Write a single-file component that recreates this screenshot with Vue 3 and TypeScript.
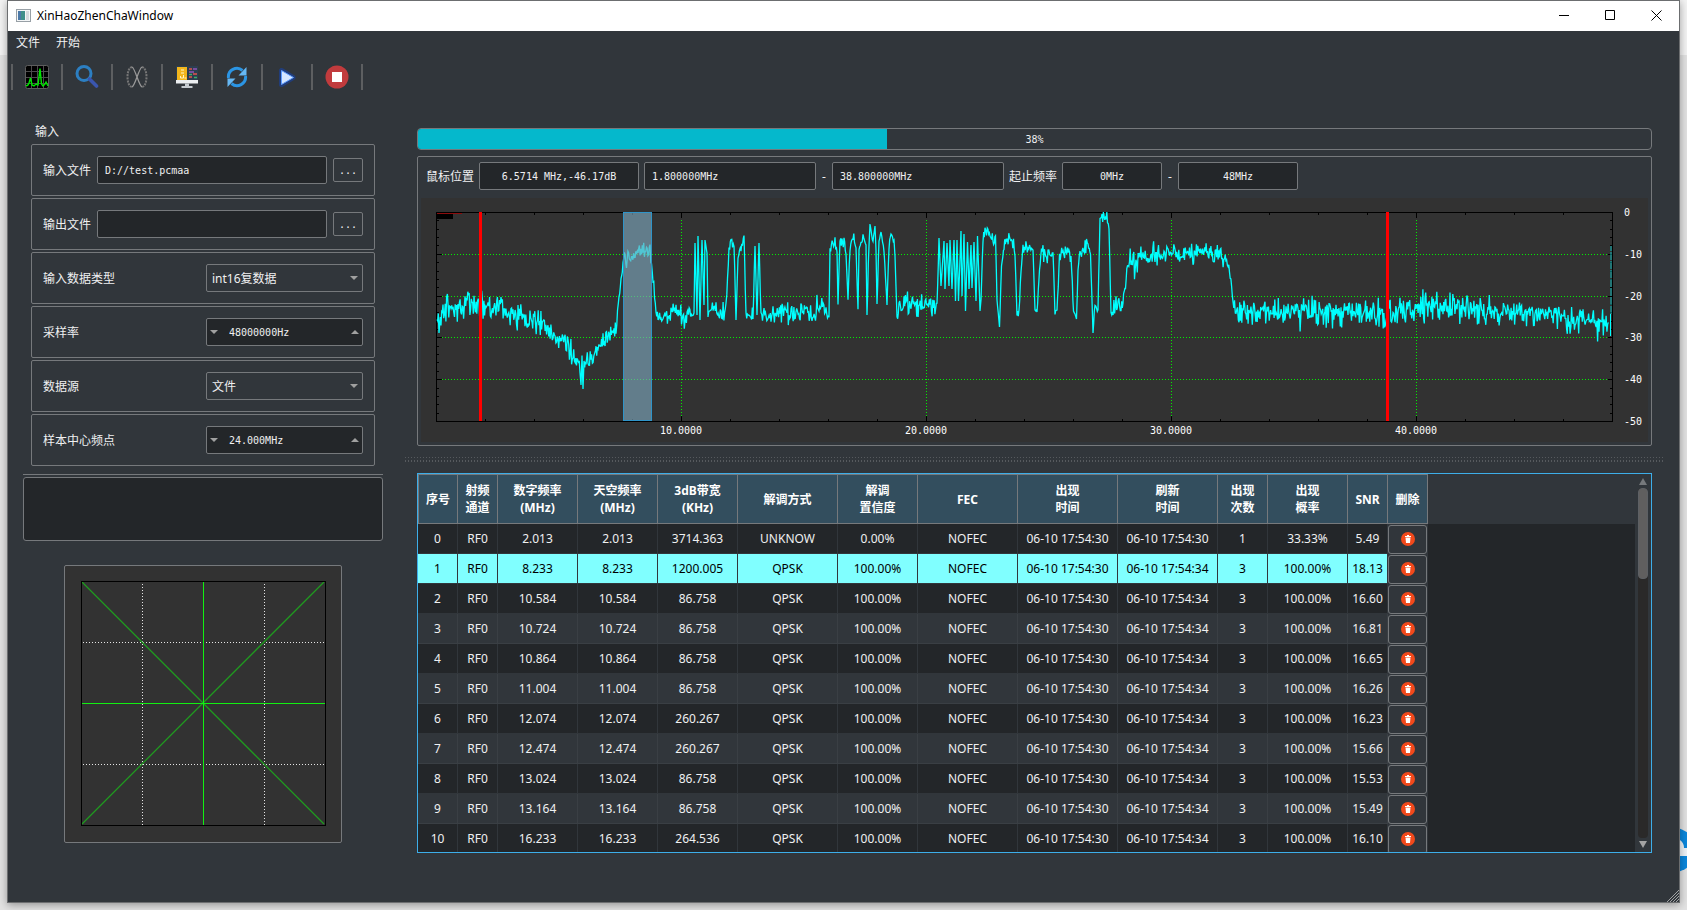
<script setup lang="ts">
import { ref } from 'vue'

interface SignalRow {
  id: number
  digital: string
  sky: string
  bandwidth: string
  modulation: string
  confidence: string
  first: string
  last: string
  count: number
  probability: string
  snr: string
}

type Anchor = [number, number, number]

const inputFile = ref('D://test.pcmaa')
const outputFile = ref('')
const dataType = ref('int16复数据')
const sampleRate = ref('48000000Hz')
const dataSource = ref('文件')
const centerFreq = ref('24.000MHz')
const message = ref('')
const progress = ref(38)
const selected = ref(1)

const mousePos = ref('6.5714 MHz,-46.17dB')
const rangeStart = ref('1.800000MHz')
const rangeEnd = ref('38.800000MHz')
const freqStart = ref('0MHz')
const freqEnd = ref('48MHz')

const columns: { lines: string[]; width: number }[] = [
  { lines: ['序号'], width: 40 },
  { lines: ['射频', '通道'], width: 40 },
  { lines: ['数字频率', '(MHz)'], width: 80 },
  { lines: ['天空频率', '(MHz)'], width: 80 },
  { lines: ['3dB带宽', '(KHz)'], width: 80 },
  { lines: ['解调方式'], width: 100 },
  { lines: ['解调', '置信度'], width: 80 },
  { lines: ['FEC'], width: 100 },
  { lines: ['出现', '时间'], width: 100 },
  { lines: ['刷新', '时间'], width: 100 },
  { lines: ['出现', '次数'], width: 50 },
  { lines: ['出现', '概率'], width: 80 },
  { lines: ['SNR'], width: 40 },
  { lines: ['删除'], width: 40 },
]

function qpsk(id: number, freq: string, bandwidth: string, snr: string): SignalRow {
  return {
    id, digital: freq, sky: freq, bandwidth, modulation: 'QPSK', confidence: '100.00%',
    first: '06-10 17:54:30', last: '06-10 17:54:34', count: 3, probability: '100.00%', snr,
  }
}

const rows = ref<SignalRow[]>([
  {
    id: 0, digital: '2.013', sky: '2.013', bandwidth: '3714.363', modulation: 'UNKNOW', confidence: '0.00%',
    first: '06-10 17:54:30', last: '06-10 17:54:30', count: 1, probability: '33.33%', snr: '5.49',
  },
  qpsk(1, '8.233', '1200.005', '18.13'),
  qpsk(2, '10.584', '86.758', '16.60'),
  qpsk(3, '10.724', '86.758', '16.81'),
  qpsk(4, '10.864', '86.758', '16.65'),
  qpsk(5, '11.004', '86.758', '16.26'),
  qpsk(6, '12.074', '260.267', '16.23'),
  qpsk(7, '12.474', '260.267', '15.66'),
  qpsk(8, '13.024', '86.758', '15.53'),
  qpsk(9, '13.164', '86.758', '15.49'),
  qpsk(10, '16.233', '264.536', '16.10'),
])

function removeRow(id: number) {
  rows.value = rows.value.filter((r) => r.id !== id)
}

/* Spectrum envelope: x position, level, noise amplitude. */
const anchors: Anchor[] = [
  [1, 110, 10], [7, 100, 17], [15, 97, 13], [29, 92, 12], [45, 93, 14], [60, 95, 10], [77, 102, 13], [94, 107, 12],
  [107, 111, 11], [117, 121, 11], [127, 129, 9], [137, 141, 12], [144, 153, 9], [145, 173, 0], [146, 145, 4],
  [147, 177, 0], [148, 150, 8], [152, 150, 8], [160, 138, 10], [167, 131, 7], [174, 121, 10], [180, 116, 8],
  [183, 88, 3], [187, 50, 8], [194, 46, 10], [202, 40, 9], [207, 35, 10], [214, 41, 9], [217, 71, 12],
  [220, 102, 4], [225, 107, 6], [240, 100, 9], [249, 106, 13], [256, 101, 9], [258, 101, 0], [259, 31, 0],
  [261, 103, 0], [262, 24, 0], [264, 108, 0], [266, 28, 0], [268, 93, 0], [269, 28, 0], [271, 41, 0],
  [272, 101, 5], [275, 99, 9], [290, 101, 9], [293, 38, 5], [295, 31, 6], [298, 30, 6], [300, 108, 0],
  [302, 46, 0], [305, 35, 6], [308, 25, 3], [310, 101, 8], [317, 101, 8], [319, 34, 0], [321, 103, 0],
  [323, 31, 0], [325, 104, 8], [328, 103, 10], [360, 99, 11], [383, 96, 11], [390, 101, 12], [393, 104, 5],
  [394, 36, 5], [399, 28, 8], [401, 40, 0], [402, 92, 3], [404, 30, 6], [408, 30, 8], [410, 42, 0], [412, 87, 3],
  [414, 36, 5], [417, 24, 6], [420, 38, 3], [422, 96, 3], [423, 38, 3], [427, 25, 3], [430, 33, 0], [431, 103, 0],
  [433, 30, 6], [434, 12, 0], [437, 30, 5], [439, 14, 0], [440, 38, 0], [441, 92, 0], [443, 31, 4], [445, 20, 0],
  [448, 38, 3], [451, 93, 0], [453, 31, 6], [455, 22, 0], [458, 29, 3], [459, 44, 0], [461, 105, 6], [463, 94, 9],
  [480, 94, 12], [501, 95, 11], [503, 26, 0], [505, 74, 0], [508, 29, 0], [509, 77, 0], [511, 31, 0], [513, 74, 0],
  [514, 28, 0], [516, 77, 0], [518, 28, 0], [519.5, 89, 0], [521, 28, 0], [522.5, 89, 0], [525, 19, 0],
  [526, 84, 0], [528, 22, 0], [529.5, 99, 0], [531.5, 30, 0], [533, 77, 0], [535, 33, 0], [536, 76, 0],
  [538, 30, 0], [540, 89, 0], [541.5, 24, 0], [544, 99, 0], [545, 88, 0], [547, 26, 5], [549, 18, 5],
  [552, 20, 9], [557, 27, 7], [559.5, 26, 5], [561, 88, 0], [563.5, 115, 0], [565.5, 54, 0], [568, 31, 8],
  [573.5, 28, 5], [577.5, 32, 6], [579, 44, 0], [581, 100, 5], [583, 96, 5], [585, 60, 0], [587, 36, 6],
  [593.5, 34, 6], [597, 38, 0], [599, 98, 0], [601, 100, 4], [603.5, 58, 0], [605.5, 38, 8], [613.5, 42, 10],
  [617, 41, 0], [619, 100, 5], [621, 98, 0], [623.5, 46, 6], [630, 40, 11], [635, 41, 8], [637.5, 97, 4],
  [640.5, 107, 0], [642, 58, 0], [644, 40, 6], [652, 34, 9], [654.5, 42, 0], [657, 121, 0], [659, 94, 6],
  [662, 99, 6], [664, 6, 3], [671.5, 6, 9], [673, 17, 0], [675, 99, 4], [680, 96, 14], [685, 97, 9], [687, 92, 4],
  [689.5, 68, 8], [693.5, 50, 8], [698.5, 48, 14], [712, 44, 11], [735, 41, 10], [753.5, 40, 10], [777, 41, 10],
  [783.5, 44, 12], [793.5, 58, 10], [797, 85, 6], [800, 98, 8], [803, 101, 10], [850, 99, 13], [893, 100, 14],
  [950, 101, 13], [980, 98, 14], [1007, 95, 13], [1047, 101, 14], [1080, 101, 12], [1120, 103, 9],
  [1127, 102, 9], [1132, 110, 14], [1147, 107, 11], [1163, 111, 15], [1173, 106, 9],
]

function buildTrace(points: Anchor[]): string {
  let seed = 20417
  const random = () => {
    seed = (seed * 16807) % 2147483647
    return seed / 2147483647
  }
  const out: string[] = []
  for (let i = 0; i < points.length - 1; i++) {
    const [x0, y0, a0] = points[i]
    const [x1, y1, a1] = points[i + 1]
    const steps = Math.max(1, Math.round((x1 - x0) / 0.7))
    for (let s = 0; s < steps; s++) {
      const t = s / steps
      const amp = a0 + (a1 - a0) * t
      const spike = random() > 0.95 ? 1.6 : 1
      const noise = (random() + random() - 1) * amp * 1.3 * spike
      const y = Math.max(0, y0 + (y1 - y0) * t + noise)
      out.push(`${(x0 + (x1 - x0) * t).toFixed(1)},${y.toFixed(1)}`)
    }
  }
  return out.join(' ')
}

const trace = buildTrace(anchors)
const pxPerMHz = 24.5
const pxPerDb = 4.18
const majorX = [10, 20, 30, 40]
const minorX = Array.from({ length: 23 }, (_, i) => (i + 1) * 2)
const levels = [0, -10, -20, -30, -40, -50]
const gridY = [42, 84, 125, 167]
const minorY = Array.from({ length: 24 }, (_, i) => Math.round((i + 1) * 2 * pxPerDb))
</script>

<template>
  <div class="desktop">
    <svg class="desk-badge" width="7" height="44" viewBox="0 0 7 44" aria-hidden="true">
      <circle cx="-10" cy="22" r="22" transform="translate(4 0)" fill="#0b87dc" />
      <path d="M0 12c3 2 4 5 4 8h3v8H0z" fill="#eef3f7" />
    </svg>
    <div class="window">
      <header class="titlebar">
        <svg width="15" height="13" viewBox="0 0 15 13" aria-hidden="true">
          <rect x=".5" y=".5" width="14" height="12" fill="#f4f6f7" stroke="#98a0a6" />
          <rect x="2" y="2" width="7" height="9" fill="#3f8f8a" />
          <rect x="2" y="2" width="3" height="9" fill="#4c79a8" />
          <rect x="10" y="2" width="3" height="9" fill="#d5dade" />
        </svg>
        <h1>XinHaoZhenChaWindow</h1>
        <div class="caption">
          <button type="button" aria-label="最小化"><svg width="11" height="11" viewBox="0 0 11 11"><path d="M0 5.5h10" stroke="#000" /></svg></button>
          <button type="button" aria-label="最大化"><svg width="11" height="11" viewBox="0 0 11 11"><path d="M.5 .5h9v9h-9z" fill="none" stroke="#000" /></svg></button>
          <button type="button" aria-label="关闭"><svg width="11" height="11" viewBox="0 0 11 11"><path d="M.5 .5l10 10M10.5 .5l-10 10" stroke="#000" /></svg></button>
        </div>
      </header>

      <nav class="menubar">
        <button type="button">文件</button>
        <button type="button">开始</button>
      </nav>

      <div class="toolbar">
        <button type="button" aria-label="频谱">
          <svg width="24" height="24" viewBox="0 0 24 24">
            <rect x=".5" y=".5" width="23" height="23" rx="2" fill="#000" stroke="#5d5d5d" />
            <path d="M6.500 1v22M12.500 1v22M18.500 1v22M1 6.500h22M1 12.500h22M1 18.500h22" stroke="#4c4c4c" fill="none" />
            <path d="M1 21l2-1 1-2 1.500-5 1.500 7 2 1 2-2 2 1 1-8 1-8.500L16.500 19l1.500 2 2-2 1-2 2 4" fill="none" stroke="#00e800" stroke-width="1.400" />
          </svg>
        </button>
        <button type="button" aria-label="搜索">
          <svg width="24" height="24" viewBox="0 0 24 24">
            <circle cx="9" cy="8.500" r="7" fill="none" stroke="#2c7fc2" stroke-width="3" />
            <path d="M14.500 14l7 7" stroke="#3a56ae" stroke-width="3.600" stroke-linecap="round" />
          </svg>
        </button>
        <button type="button" aria-label="变量">
          <svg width="24" height="24" viewBox="0 0 24 24" fill="none" stroke="#777" stroke-width="1.300">
            <path d="M7 2C1 3 1 21 7 22M17 2c6 1 6 19 0 20" stroke-dasharray="2 1" stroke-width="2" />
            <path d="M7 2c3 1 7 19 10 20M17 2C14 3 10 21 7 22" stroke="#999" />
          </svg>
        </button>
        <button type="button" aria-label="显示">
          <svg width="24" height="24" viewBox="0 0 24 24">
            <rect x="1" y="1" width="22" height="15" fill="#2c3e50" />
            <rect x="2" y="2" width="10" height="13" fill="#f2b61c" />
            <path d="M6 5h3M6 8h3M8.500 10v3h-3v-2M9.500 13h2" stroke="#fff5c8" fill="none" />
            <path d="M14 4h3M18 9h4M14 12h3" stroke="#e2544c" stroke-width="1.500" />
            <path d="M18 4h4M14 7h5" stroke="#8e54b8" stroke-width="1.500" />
            <path d="M14 9.500h3M19 12.500h3" stroke="#3fae6a" stroke-width="1.500" />
            <path d="M1 15h22v3.500H1z" fill="#eceff1" />
            <path d="M10 18.500h4V21h3.500v2h-11v-2H10z" fill="#c5cbd0" />
          </svg>
        </button>
        <button type="button" aria-label="刷新">
          <svg width="24" height="24" viewBox="0 0 24 24">
            <path d="M3.500 13a8.500 8.500 0 0 1 14-7.500" fill="none" stroke="#2b95e4" stroke-width="3" />
            <path d="M20.500 11a8.500 8.500 0 0 1-14 7.500" fill="none" stroke="#2b95e4" stroke-width="3" />
            <path d="M21.500 2v8.500h-8z" fill="#66b8f4" />
            <path d="M2.500 22v-8.500h8z" fill="#66b8f4" />
          </svg>
        </button>
        <button type="button" aria-label="播放">
          <svg width="24" height="24" viewBox="0 0 24 24">
            <path d="M6.500 5.500v14L18 12.500z" fill="#1469ff" stroke="#0a49d8" stroke-width="5" stroke-linejoin="round" opacity=".4" />
            <path d="M6.500 5.500v14L18.500 12.500z" fill="#d5e7ff" stroke="#5c9bff" stroke-width="1" stroke-linejoin="round" />
          </svg>
        </button>
        <button type="button" aria-label="停止">
          <svg width="24" height="24" viewBox="0 0 24 24">
            <circle cx="12" cy="12" r="11.500" fill="#c13b3d" />
            <rect x="7" y="7" width="10" height="10" fill="#fff" />
          </svg>
        </button>
      </div>

      <main class="content">
        <aside class="side">
          <h2>输入</h2>
          <div class="fields">
            <div class="field">
              <label for="in-file">输入文件</label>
              <input id="in-file" v-model="inputFile" class="box grow" type="text" />
              <button type="button" class="browse" aria-label="选择输入文件">...</button>
            </div>
            <div class="field">
              <label for="out-file">输出文件</label>
              <input id="out-file" v-model="outputFile" class="box grow" type="text" />
              <button type="button" class="browse" aria-label="选择输出文件">...</button>
            </div>
            <div class="field">
              <label for="dtype">输入数据类型</label>
              <div class="control">
                <select id="dtype" v-model="dataType"><option>int16复数据</option><option>int16实数据</option></select>
                <i class="arrow down"></i>
              </div>
            </div>
            <div class="field">
              <label for="rate">采样率</label>
              <div class="control spin">
                <button type="button" aria-label="减小采样率"><i class="arrow down"></i></button>
                <input id="rate" v-model="sampleRate" type="text" />
                <button type="button" aria-label="增大采样率"><i class="arrow up"></i></button>
              </div>
            </div>
            <div class="field">
              <label for="source">数据源</label>
              <div class="control">
                <select id="source" v-model="dataSource"><option>文件</option><option>网络</option></select>
                <i class="arrow down"></i>
              </div>
            </div>
            <div class="field">
              <label for="center">样本中心频点</label>
              <div class="control spin">
                <button type="button" aria-label="减小中心频点"><i class="arrow down"></i></button>
                <input id="center" v-model="centerFreq" type="text" />
                <button type="button" aria-label="增大中心频点"><i class="arrow up"></i></button>
              </div>
            </div>
          </div>
          <div class="rule"></div>
          <textarea v-model="message" aria-label="消息"></textarea>
          <div class="scatter">
            <svg viewBox="0 1 276 276" role="img" aria-label="星座图">
              <g stroke="#e6e6e6" stroke-dasharray="1 2">
                <path d="M77.500 16v244M199.500 16v244M18 77.500h242M18 199.500h242" />
              </g>
              <path d="M17 17l242 242M259 17L17 259" stroke="#1f9a1f" stroke-width="1.300" />
              <path d="M138.500 16v244M16 138.500h244" stroke="#12ef12" />
              <rect x="16.500" y="16.500" width="244" height="244" fill="none" stroke="#000" />
            </svg>
          </div>
        </aside>

        <section class="main">
          <div class="progress" role="progressbar" :aria-valuenow="progress" aria-valuemin="0" aria-valuemax="100">
            <div class="bar" :style="{ width: progress + '%' }"></div>
            <span>{{ progress }}%</span>
          </div>

          <div class="chart">
            <div class="readout">
              <label for="mouse">鼠标位置</label>
              <input id="mouse" v-model="mousePos" class="box w-mouse mid" type="text" />
              <input v-model="rangeStart" class="box w-range" type="text" aria-label="选区起点" />
              <span class="dash">-</span>
              <input v-model="rangeEnd" class="box w-range" type="text" aria-label="选区终点" />
              <label for="f0">起止频率</label>
              <input id="f0" v-model="freqStart" class="box w-start mid" type="text" />
              <span class="dash">-</span>
              <input v-model="freqEnd" class="box w-end mid" type="text" aria-label="终止频率" />
            </div>
            <svg class="spectrum" viewBox="-15 -14 1227 244" role="img" aria-label="频谱图">
              <rect x="-15" y="-14" width="1227" height="244" fill="#323232" />
              <g stroke="#00f000" stroke-dasharray="1 2">
                <path v-for="y in gridY" :key="y" :d="`M6 ${y + 0.5}H1172`" />
                <path v-for="m in majorX" :key="m" :d="`M${m * pxPerMHz + 0.5} 8V205`" />
              </g>
              <g stroke="#000" fill="none">
                <rect x=".5" y=".5" width="1176" height="209" />
                <path v-for="m in minorX" :key="m" :d="`M${m * pxPerMHz + 0.5} 0v${m % 10 ? 3 : 6}M${m * pxPerMHz + 0.5} 209v${m % 10 ? -2 : -5}`" />
                <path v-for="y in minorY" :key="y" :d="`M0 ${y + 0.5}h3M1177 ${y + 0.5}h-3`" />
                <path v-for="y in gridY" :key="y" :d="`M0 ${y + 0.5}h6M1177 ${y + 0.5}h-5`" />
              </g>
              <path d="M1 2h16v5H1z" fill="#000" />
              <path d="M1 1.500h25" stroke="#8c0d0d" />
              <polyline :points="trace" fill="none" stroke="#0ff" stroke-width="1.300" />
              <path d="M1174.500 124V102" stroke="#0ff" />
              <path d="M1175 102V34" stroke="#12b9b9" stroke-dasharray="8 1" />
              <rect x="187.500" y=".5" width="28" height="208" fill="#7da6bb" fill-opacity=".65" stroke="#2f94c8" />
              <rect x="43" y="0" width="3" height="209" fill="#f00" />
              <rect x="950" y="0" width="3" height="209" fill="#f00" />
              <g class="axis">
                <text v-for="m in majorX" :key="m" :x="m * pxPerMHz" y="222" text-anchor="middle">{{ m }}.0000</text>
                <text v-for="l in levels" :key="l" x="1188" :y="-l * pxPerDb + 4">{{ l }}</text>
              </g>
            </svg>
          </div>

          <div class="splitter"></div>

          <div class="grid">
            <div class="view">
              <table>
                <colgroup>
                  <col v-for="(c, i) in columns" :key="i" :style="{ width: c.width + 'px' }" />
                </colgroup>
                <thead>
                  <tr>
                    <th v-for="(c, i) in columns" :key="i" scope="col">
                      <div v-for="line in c.lines" :key="line">{{ line }}</div>
                    </th>
                  </tr>
                </thead>
                <tbody>
                  <tr v-for="r in rows" :key="r.id" :class="{ alt: r.id % 2, on: r.id === selected }" @click="selected = r.id">
                    <td>{{ r.id }}</td>
                    <td>RF0</td>
                    <td>{{ r.digital }}</td>
                    <td>{{ r.sky }}</td>
                    <td>{{ r.bandwidth }}</td>
                    <td>{{ r.modulation }}</td>
                    <td>{{ r.confidence }}</td>
                    <td>NOFEC</td>
                    <td>{{ r.first }}</td>
                    <td>{{ r.last }}</td>
                    <td>{{ r.count }}</td>
                    <td>{{ r.probability }}</td>
                    <td>{{ r.snr }}</td>
                    <td class="del">
                      <button type="button" :aria-label="'删除 ' + r.id" @click.stop="removeRow(r.id)">
                        <svg width="14" height="14" viewBox="0 0 14 14">
                          <circle cx="7" cy="7" r="7" fill="#f2491b" />
                          <path d="M4 4h2V3h2v1h2v1H4zM4.500 5.500h5L9 11H5z" fill="#fff" />
                        </svg>
                      </button>
                    </td>
                  </tr>
                </tbody>
              </table>
            </div>
            <div class="scroll">
              <i class="tri up"></i>
              <div class="track"><div class="thumb"></div></div>
              <i class="tri down"></i>
            </div>
          </div>
        </section>
      </main>
      <svg class="grip" width="12" height="12" viewBox="0 0 12 12" aria-hidden="true">
        <path d="M0 12L12 0M3 12l9-9M6 12l6-6M9 12l3-3" stroke="#a0a2a4" />
      </svg>
    </div>
  </div>
</template>

<style>
body {
  background: #dfdfdf;
}
</style>

<style scoped>
* {
  box-sizing: border-box;
}
.desktop {
  position: relative;
  display: flex;
  height: 100vh;
  min-width: 1460px;
  padding: 0 7px 7px;
  overflow: hidden;
  background: linear-gradient(#f3f3f3 0 55px, #e2e2e2 55px 100%);
  font-family: "Noto Sans", "Noto Sans CJK SC", sans-serif;
  font-size: 12px;
  color: #eff0f1;
}
.desk-badge {
  position: absolute;
  right: 0;
  bottom: 38px;
}
.window {
  position: relative;
  display: flex;
  flex: 1;
  flex-direction: column;
  min-width: 0;
  border: 1px solid #6c6e70;
  background: #31363b;
  box-shadow: 0 2px 8px rgba(0, 0, 0, 0.35);
}
button,
input,
select,
textarea {
  margin: 0;
  padding: 0;
  border: 0;
  outline: 0;
  background: none;
  color: inherit;
  font: inherit;
}
.titlebar {
  display: flex;
  align-items: center;
  height: 30px;
  padding: 0 0 2px 8px;
  background: #fff;
  color: #000;
}
h1 {
  flex: 1;
  margin: 0 0 0 6px;
  font-size: 12px;
  font-weight: 400;
}
.caption {
  display: flex;
}
.caption button {
  display: grid;
  place-items: center;
  width: 46px;
  height: 28px;
}
.menubar {
  display: flex;
  gap: 16px;
  height: 22px;
  padding-left: 8px;
}
.toolbar {
  display: flex;
  height: 47px;
  padding: 11px 0 0 3px;
}
.toolbar button {
  display: grid;
  place-items: center;
  width: 50px;
  height: 26px;
  border-left: 2px solid #5d5f61;
}
.toolbar button:last-child {
  width: 52px;
  border-right: 2px solid #5d5f61;
}
.content {
  display: grid;
  flex: 1;
  grid-template-columns: 360px minmax(0, 1fr);
  gap: 22px;
  min-height: 0;
  padding: 0 16px 49px 15px;
}
.side {
  padding-top: 20px;
}
h2 {
  margin: 0 12px;
  font-size: 12px;
  font-weight: 400;
  line-height: 24px;
}
.fields {
  display: grid;
  gap: 2px;
  padding: 0 8px;
}
.field {
  display: flex;
  align-items: center;
  gap: 6px;
  height: 52px;
  padding: 0 11px;
  border: 1px solid #76797c;
  border-radius: 2px;
}
.box {
  min-width: 0;
  height: 28px;
  padding: 0 7px;
  border: 1px solid #76797c;
  border-radius: 2px;
  background: #232629;
  font-family: "DejaVu Sans Mono", monospace;
  font-size: 10px;
}
.grow {
  flex: 1;
}
.mid {
  text-align: center;
}
.browse {
  width: 30px;
  height: 24px;
  border: 1px solid #76797c;
  border-radius: 2px;
  font-family: "DejaVu Sans Mono", monospace;
  font-size: 10px;
}
.control {
  display: flex;
  align-items: center;
  width: 157px;
  height: 28px;
  margin-left: auto;
  padding-right: 4px;
  border: 1px solid #76797c;
  border-radius: 2px;
}
.control select {
  flex: 1;
  height: 26px;
  padding-left: 5px;
  appearance: none;
}
.spin {
  padding: 0 3px;
  background: #232629;
}
.spin input {
  flex: 1;
  min-width: 0;
  padding-left: 11px;
  font-family: "DejaVu Sans Mono", monospace;
  font-size: 10px;
}
.spin button {
  display: grid;
  width: 8px;
  height: 26px;
  place-items: center;
}
.arrow {
  border: 4px solid transparent;
}
.arrow.down {
  border-top-color: #a0a0a0;
  border-bottom-width: 0;
}
.arrow.up {
  border-bottom-color: #a0a0a0;
  border-top-width: 0;
}
.rule {
  height: 9px;
  margin-bottom: 2px;
  border-bottom: 1px solid #76797c;
}
textarea {
  display: block;
  width: 100%;
  height: 64px;
  border: 1px solid #76797c;
  border-radius: 3px;
  background: #232629;
  resize: none;
}
.scatter {
  width: 278px;
  margin: 24px auto 0;
  border: 1px solid #76797c;
  border-radius: 2px;
  background: #323232;
}
.scatter svg,
.spectrum {
  display: block;
  width: 100%;
}
.main {
  display: flex;
  flex-direction: column;
  min-height: 0;
  padding-top: 28px;
}
.progress,
.chart,
.grid {
  margin: 0 11px 0 12px;
}
.progress {
  display: grid;
  height: 22px;
  margin-bottom: 6px;
  border: 1px solid #76797c;
  border-radius: 4px;
  overflow: hidden;
}
.progress > * {
  grid-area: 1 / 1;
}
.bar {
  background: #05b8cc;
}
.progress span {
  place-self: center;
  font-family: "DejaVu Sans Mono", monospace;
  font-size: 10px;
}
.chart {
  padding: 5px 3px 3px;
  border: 1px solid #76797c;
  border-radius: 2px;
}
.readout {
  display: flex;
  align-items: center;
  gap: 5px;
  margin-bottom: 8px;
  padding-left: 5px;
}
.w-mouse {
  width: 160px;
}
.w-range {
  width: 172px;
}
.w-start {
  width: 100px;
}
.w-end {
  width: 120px;
}
.dash {
  width: 6px;
  text-align: center;
}
.axis text {
  fill: #fff;
  font-family: "DejaVu Sans Mono", monospace;
  font-size: 10px;
}
.splitter {
  flex: none;
  height: 5px;
  margin: 11px 0;
  background:
    repeating-linear-gradient(90deg, #565a5e 0 1px, transparent 1px 3px) 0 0 / 100% 1px no-repeat,
    repeating-linear-gradient(90deg, #565a5e 0 1px, transparent 1px 3px) 0 100% / 100% 2px no-repeat;
}
.grid {
  display: flex;
  flex: 1;
  min-height: 0;
  border: 1px solid #3daee9;
}
.view {
  flex: 1;
  min-width: 0;
  overflow: hidden;
  background: linear-gradient(#31363b 0 50px, #232629 50px 100%);
}
table {
  width: 1010px;
  table-layout: fixed;
  border-collapse: separate;
  border-spacing: 0;
}
th {
  height: 50px;
  padding: 0;
  border: 1px solid #76797c;
  border-left-width: 0;
  background: #334e5e;
  color: #fff;
  font-weight: 700;
  line-height: 17px;
}
th:first-child {
  border-left-width: 1px;
}
td {
  height: 30px;
  padding: 0;
  border: 0 solid #31363b;
  border-width: 0 1px 1px 0;
  background: #232629;
  line-height: 16px;
  text-align: center;
  white-space: nowrap;
}
.alt td {
  border-color: #3a3f44;
  background: #31363b;
}
.on td {
  border-color: #31363b;
  background: #80ffff;
  color: #000;
}
td.del {
  border: 0;
  background: #31363b;
}
.del button {
  display: grid;
  width: 39px;
  height: 29px;
  place-items: center;
  border: 1px solid #76797c;
  border-radius: 3px;
}
.scroll {
  display: flex;
  flex-direction: column;
  align-items: center;
  width: 16px;
  padding: 4px 0;
}
.track {
  flex: 1;
  width: 10px;
  margin: 3px 0;
  border-radius: 4px;
  background: #2a2929;
}
.thumb {
  height: 26%;
  border: 1px solid #5d6064;
  border-radius: 4px;
  background: #605f5f;
}
.tri {
  border: 4px solid transparent;
}
.tri.up {
  border-top-width: 0;
  border-bottom: 7px solid #76797c;
}
.tri.down {
  border-bottom-width: 0;
  border-top: 7px solid #a4a4a4;
}
.grip {
  position: absolute;
  right: 0;
  bottom: 0;
}
</style>
